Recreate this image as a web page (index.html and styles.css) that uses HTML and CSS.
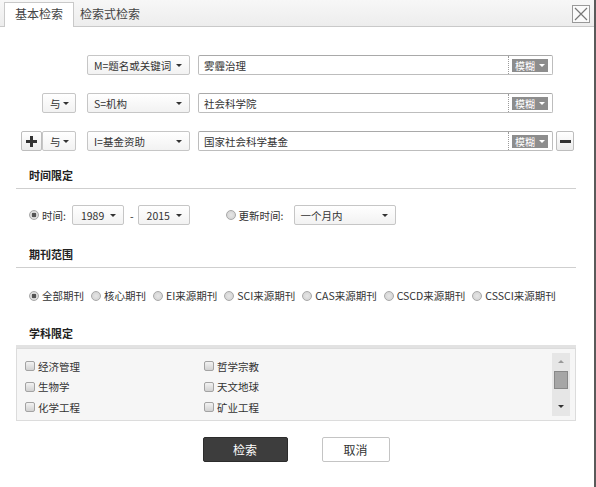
FILE: index.html
```html
<!DOCTYPE html>
<html lang="zh-CN">
<head>
    <meta charset="UTF-8">
    <title>高级检索</title>
    <link rel="stylesheet" href="styles.css">
</head>
<body>
    <div class="dialog">
        <div class="tabbar">
            <div class="tab active">基本检索</div>
            <div class="tab">检索式检索</div>
            <div class="close">
                <svg width="16" height="16" viewBox="0 0 16 16">
                    <path d="M2 2 L14 14 M14 2 L2 14" stroke="#777" stroke-width="1.2" fill="none"/>
                </svg>
            </div>
        </div>

        <div class="conditions">
            <div class="cond-row">
                <span class="ph-add"></span>
                <span class="ph-logic"></span>
                <div class="select field">M=题名或关键词<i class="caret"></i></div>
                <div class="keyword">
                    <span class="kw-text">雾霾治理</span>
                    <span class="match"><span class="match-btn">模糊<i class="caret light"></i></span></span>
                </div>
            </div>
            <div class="cond-row">
                <span class="ph-add"></span>
                <div class="select logic">与<i class="caret"></i></div>
                <div class="select field">S=机构<i class="caret"></i></div>
                <div class="keyword">
                    <span class="kw-text">社会科学院</span>
                    <span class="match"><span class="match-btn">模糊<i class="caret light"></i></span></span>
                </div>
            </div>
            <div class="cond-row">
                <div class="btn-add"><span class="plus"></span></div>
                <div class="select logic">与<i class="caret"></i></div>
                <div class="select field">I=基金资助<i class="caret"></i></div>
                <div class="keyword">
                    <span class="kw-text">国家社会科学基金</span>
                    <span class="match"><span class="match-btn">模糊<i class="caret light"></i></span></span>
                </div>
                <div class="btn-remove"><span class="minus"></span></div>
            </div>
        </div>

        <div class="section time">
            <div class="section-title">时间限定</div>
            <div class="time-row">
                <span class="radio checked"></span>
                <span class="label">时间:</span>
                <div class="select year">1989<i class="caret"></i></div>
                <span class="dash">-</span>
                <div class="select year">2015<i class="caret"></i></div>
                <span class="radio update"></span>
                <span class="label">更新时间:</span>
                <div class="select period">一个月内<i class="caret"></i></div>
            </div>
        </div>

        <div class="section journal">
            <div class="section-title">期刊范围</div>
            <div class="journal-row">
                <label class="opt"><span class="radio checked"></span>全部期刊</label>
                <label class="opt"><span class="radio"></span>核心期刊</label>
                <label class="opt"><span class="radio"></span>EI来源期刊</label>
                <label class="opt"><span class="radio"></span>SCI来源期刊</label>
                <label class="opt"><span class="radio"></span>CAS来源期刊</label>
                <label class="opt"><span class="radio"></span>CSCD来源期刊</label>
                <label class="opt"><span class="radio"></span>CSSCI来源期刊</label>
            </div>
        </div>

        <div class="section subject">
            <div class="section-title thick">学科限定</div>
            <div class="subject-box">
                <div class="subject-list">
                    <label class="opt"><span class="checkbox"></span>经济管理</label>
                    <label class="opt"><span class="checkbox"></span>哲学宗教</label>
                    <label class="opt"><span class="checkbox"></span>生物学</label>
                    <label class="opt"><span class="checkbox"></span>天文地球</label>
                    <label class="opt"><span class="checkbox"></span>化学工程</label>
                    <label class="opt"><span class="checkbox"></span>矿业工程</label>
                </div>
                <div class="scrollbar">
                    <i class="arrow up"></i>
                    <div class="thumb"></div>
                    <i class="arrow down"></i>
                </div>
            </div>
        </div>

        <div class="actions">
            <button class="btn-search">检索</button>
            <button class="btn-cancel">取消</button>
        </div>
    </div>
</body>
</html>
```

FILE: styles.css
```css
body {
    margin: 0;
    font-family: "Noto Sans CJK SC", "Noto Sans", sans-serif;
    font-size: 10.5px;
    color: #333;
    background: #fff;
}
.dialog {
    width: 596px;
    height: 487px;
    box-sizing: border-box;
    border-right: 2px solid #5a5a5a;
    background: #fff;
}

/* tabs */
.tabbar {
    height: 27px;
    box-sizing: border-box;
    display: flex;
    align-items: flex-end;
    padding-left: 4px;
    background: linear-gradient(#f7f7f7, #ededed);
    border-bottom: 1px solid #c9c9c9;
}
.tab {
    height: 23px;
    line-height: 22px;
    padding: 0 6px;
    font-size: 12px;
    color: #444;
}
.tab.active {
    height: 24px;
    padding: 0 10px;
    background: #fff;
    border: 1px solid #c9c9c9;
    border-bottom: none;
    margin-bottom: -1px;
}
.close {
    margin-left: auto;
    margin-right: 4px;
    align-self: flex-start;
    margin-top: 5px;
    width: 16px;
    height: 16px;
    border: 1px solid #999;
    background: #fafafa;
}
.close svg {
    display: block;
}

/* condition rows */
.conditions {
    padding: 28px 0 0 21px;
    display: flex;
    flex-direction: column;
    gap: 18px;
}
.cond-row {
    display: flex;
    align-items: center;
    height: 20px;
}
.ph-add {
    width: 21px;
}
.ph-logic {
    width: 34px;
}
.select {
    height: 20px;
    box-sizing: border-box;
    border: 1px solid #c6c6c6;
    border-radius: 2px;
    background: linear-gradient(#fff, #f2f2f2);
    display: flex;
    align-items: center;
    justify-content: space-between;
    padding: 0 7px 0 6px;
    white-space: nowrap;
}
.caret {
    width: 0;
    height: 0;
    border-left: 3px solid transparent;
    border-right: 3px solid transparent;
    border-top: 3px solid #333;
}
.caret.light {
    border-top-color: #fff;
    margin-left: 4px;
}
.logic {
    width: 34px;
    padding: 0 6px 0 7px;
}
.field {
    width: 103px;
    margin-left: 11px;
}
.keyword {
    width: 355px;
    height: 20px;
    box-sizing: border-box;
    margin-left: 8px;
    border: 1px solid #bdbdbd;
    border-top-color: #a9a9a9;
    border-radius: 2px;
    background: #fff;
    display: flex;
    align-items: center;
}
.kw-text {
    flex: 1;
    padding-left: 5px;
}
.match {
    height: 18px;
    border-left: 1px dotted #9a9a9a;
    display: flex;
    align-items: center;
    padding: 0 4px 0 3px;
}
.match-btn {
    height: 13px;
    display: flex;
    align-items: center;
    padding: 0 3px 0 3px;
    background: #8d8d8d;
    color: #fff;
    font-size: 10px;
    white-space: nowrap;
}
.btn-add, .btn-remove {
    height: 20px;
    box-sizing: border-box;
    border: 1px solid #bdbdbd;
    border-radius: 2px;
    background: linear-gradient(#fff, #ececec);
    display: flex;
    align-items: center;
    justify-content: center;
}
.btn-add {
    width: 21px;
}
.btn-remove {
    width: 18px;
    margin-left: 3px;
}
.plus {
    width: 11px;
    height: 11px;
    background:
        linear-gradient(#333, #333) center / 11px 3px no-repeat,
        linear-gradient(#333, #333) center / 3px 11px no-repeat;
}
.minus {
    width: 11px;
    height: 3px;
    background: #333;
}

/* sections */
.section {
    margin: 11px 18px 0 16px;
}
.section.journal {
    margin-top: 16px;
}
.section.subject {
    margin-top: 17px;
}
.section-title {
    height: 26px;
    line-height: 26px;
    padding-left: 13px;
    font-size: 11px;
    font-weight: bold;
    color: #222;
    border-bottom: 1px solid #cfcfcf;
}
.section-title.thick {
    height: 25px;
    border-bottom: 3px solid #e2e2e2;
}
.time-row {
    display: flex;
    align-items: center;
    height: 20px;
    margin-top: 16px;
    padding-left: 13px;
}
.label {
    margin-left: 3px;
}
.year {
    width: 52px;
    margin-left: 6px;
    padding: 0 7px 0 8px;
}
.dash {
    margin: 0 0 0 6px;
}
.dash + .year {
    margin-left: 4px;
}
.radio.update {
    margin-left: 36px;
}
.period {
    width: 102px;
    margin-left: 10px;
}
.radio {
    display: inline-block;
    width: 10px;
    height: 10px;
    box-sizing: border-box;
    border: 1px solid #a8a8a8;
    border-radius: 50%;
    background: radial-gradient(circle, #e6e6e6 0, #cfcfcf 100%);
    flex-shrink: 0;
}
.radio.checked {
    background: radial-gradient(circle, #555 0, #555 2.2px, #e0e0e0 2.6px, #d0d0d0 100%);
}
.journal-row {
    display: flex;
    align-items: center;
    gap: 7px;
    margin-top: 20px;
    padding-left: 13px;
}
.opt {
    display: flex;
    align-items: center;
    gap: 3px;
    white-space: nowrap;
}

/* subjects */
.subject-box {
    height: 73px;
    box-sizing: border-box;
    border: 1px solid #dcdcdc;
    background: #f6f6f6;
    display: flex;
}
.subject-list {
    flex: 1;
    display: grid;
    grid-template-columns: 179px 179px;
    grid-auto-rows: 20.5px;
    align-items: center;
    padding: 7px 0 0 8px;
}
.checkbox {
    width: 10px;
    height: 10px;
    box-sizing: border-box;
    border: 1px solid #a3a3a3;
    border-radius: 2px;
    background: linear-gradient(#f2f2f2, #d2d2d2);
}
.scrollbar {
    width: 18px;
    margin: 4px 5px 4px 0;
    background: #e6e6e6;
    display: flex;
    flex-direction: column;
    align-items: center;
}
.arrow {
    width: 0;
    height: 0;
    border-left: 3px solid transparent;
    border-right: 3px solid transparent;
}
.arrow.up {
    margin-top: 7px;
    border-bottom: 3px solid #999;
}
.arrow.down {
    margin-top: auto;
    margin-bottom: 8px;
    border-top: 3px solid #333;
}
.thumb {
    width: 14px;
    height: 18px;
    margin-top: 8px;
    box-sizing: border-box;
    border: 1px solid #888;
    background: #a6a6a6;
}

/* buttons */
.actions {
    display: flex;
    justify-content: center;
    gap: 34px;
    margin-top: 16px;
    padding-right: 2px;
}
.actions button {
    height: 25px;
    font-family: inherit;
    font-size: 12px;
    border-radius: 2px;
    cursor: pointer;
}
.btn-search {
    width: 85px;
    border: 1px solid #2c2c2c;
    background: #3d3d3d;
    color: #fff;
}
.btn-cancel {
    width: 68px;
    border: 1px solid #c4c4c4;
    background: #fff;
    color: #333;
}
```
